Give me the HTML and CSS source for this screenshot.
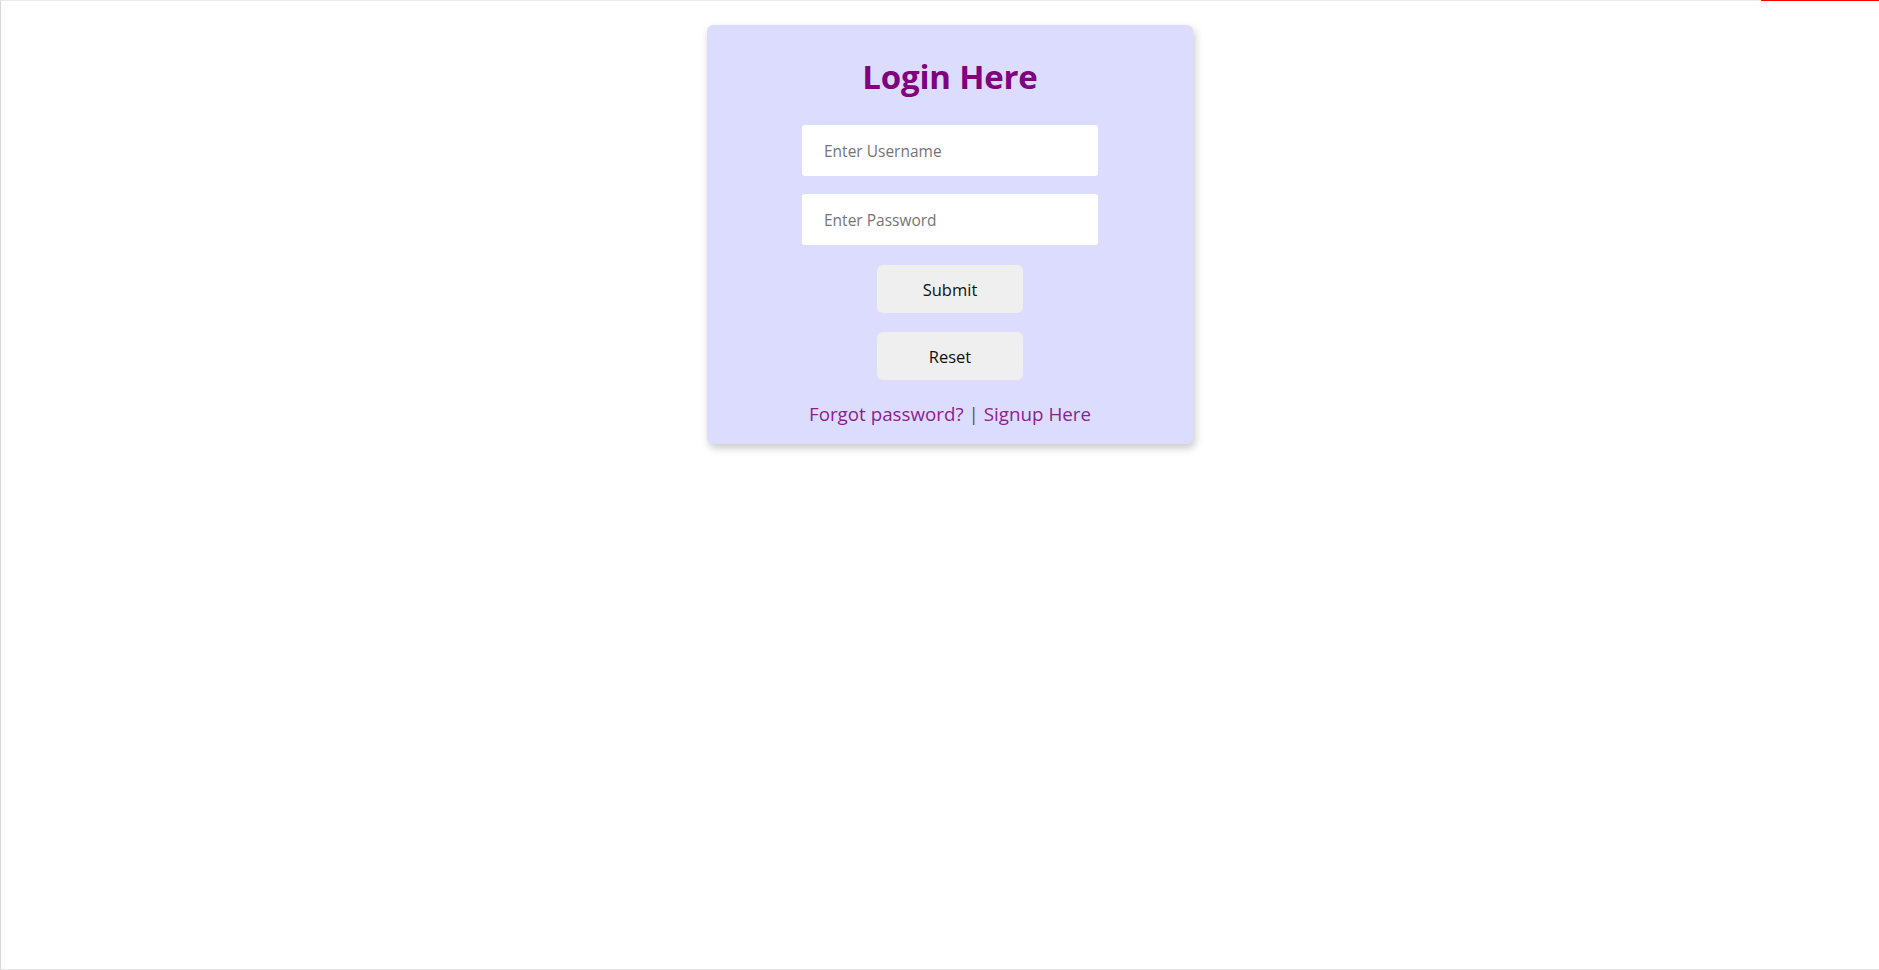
FILE: index.html
```html
<!DOCTYPE html>
<html lang="en">
<head>
<meta charset="utf-8">
<title>Login</title>
<link rel="stylesheet" href="styles.css">
</head>
<body>
<div class="progress"></div>
<div class="page">
  <form class="card">
    <h1 class="title">Login Here</h1>
    <input class="field" type="text" placeholder="Enter Username">
    <input class="field field-gap" type="password" placeholder="Enter Password">
    <button class="btn btn-first" type="submit">Submit</button>
    <button class="btn btn-second" type="reset">Reset</button>
    <p class="links"><a class="link" href="#">Forgot password?</a> <span class="sep">|</span> <a class="link" href="#">Signup Here</a></p>
  </form>
</div>
</body>
</html>
```

FILE: styles.css
```css
html, body {
  margin: 0;
  padding: 0;
  background: #ffffff;
}

body {
  font-family: "Open Sans", "Noto Sans", sans-serif;
  height: 970px;
  box-sizing: border-box;
  border-top: 1px solid #ececec;
  border-left: 1px solid #d8d8dc;
  border-bottom: 1px solid #e4e4e4;
  overflow: hidden;
}

.progress {
  position: absolute;
  top: 0;
  left: 1761px;
  width: 118px;
  height: 1px;
  background: #ff0000;
}

.page {
  display: flex;
  justify-content: center;
  padding-left: 20px;
  padding-top: 24px;
}

.card {
  width: 486px;
  height: 419px;
  box-sizing: border-box;
  background: #dcdcff;
  border-radius: 6px;
  box-shadow: 2px 4px 8px rgba(0, 0, 0, 0.22);
  display: flex;
  flex-direction: column;
  align-items: center;
  padding-top: 30px;
}

.title {
  margin: 0;
  height: 43px;
  line-height: 43px;
  font-size: 33px;
  font-weight: 700;
  color: #800080;
  letter-spacing: -0.2px;
}

.field {
  margin-top: 27px;
  width: 296px;
  height: 51px;
  box-sizing: border-box;
  border: none;
  border-radius: 3px;
  background: #ffffff;
  padding: 0 22px;
  font-family: "Open Sans", "Noto Sans", sans-serif;
  font-size: 15.5px;
  color: #222;
  outline: none;
}

.field::placeholder {
  color: #757575;
}

.field-gap {
  margin-top: 18px;
}

.btn {
  width: 146px;
  height: 48px;
  border: none;
  border-radius: 6px;
  background: #efefef;
  font-family: "Open Sans", "Noto Sans", sans-serif;
  font-size: 16.5px;
  color: #111;
  cursor: pointer;
}

.btn-first {
  margin-top: 20px;
}

.btn-second {
  margin-top: 19px;
}

.links {
  margin: 21px 0 0;
  height: 26px;
  line-height: 26px;
  font-size: 18.8px;
  color: #555;
}

.link {
  color: #8f1d8f;
  text-decoration: none;
}

.sep {
  color: #555566;
}
```
